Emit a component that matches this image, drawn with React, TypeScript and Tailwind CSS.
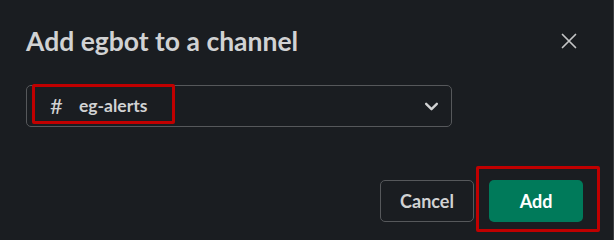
import React from 'react';

const ChevronDown: React.FC = () => (
    <svg width="15" height="15" viewBox="0 0 14 14" fill="none">
        <path d="M2 4.5 L7 9.5 L12 4.5" stroke="#d1d2d3" strokeWidth="2.2" strokeLinecap="round" strokeLinejoin="round" />
    </svg>
);

const CloseIcon: React.FC = () => (
    <svg width="16" height="16" viewBox="0 0 16 16" fill="none">
        <path d="M1.5 1.5 L14.5 14.5 M14.5 1.5 L1.5 14.5" stroke="#c4c5c6" strokeWidth="1.7" strokeLinecap="round" />
    </svg>
);

const App: React.FC = () => {
    return (
        <div
            className="relative w-[614px] h-[240px] bg-[#1a1d21] border-r border-[#3b3d40] overflow-hidden text-[#d1d2d3]"
            style={{ fontFamily: 'Lato, "Liberation Sans", sans-serif' }}
        >
            <div className="pl-[26px] pr-[30px]">
                {/* header */}
                <div className="flex items-center justify-between pt-[24px] h-[58px]">
                    <h1 className="text-[26.5px] font-bold leading-[34px]">Add egbot to a channel</h1>
                    <button className="w-[32px] h-[32px] -mr-[2px] flex items-center justify-center">
                        <CloseIcon />
                    </button>
                </div>

                {/* channel select */}
                <div className="relative mt-[27px] w-[426px] h-[42px] rounded-[5px] border border-[#56585b] flex items-center pl-[23px] pr-[12px]">
                    <span className="text-[22px] leading-none font-normal text-[#d1d2d3] w-[29px]">#</span>
                    <span className="text-[17.5px] font-bold leading-none">eg-alerts</span>
                    <span className="ml-auto flex items-center"><ChevronDown /></span>
                    <div className="absolute left-[5px] top-[-2px] w-[143px] h-[40px] border-[3px] border-[#c00000] rounded-[2px] pointer-events-none" />
                </div>

                {/* footer */}
                <div className="flex justify-end gap-[15px] mt-[53px]">
                    <button className="w-[94px] h-[42px] rounded-[5px] border border-[#56585b] text-[18px] font-bold text-[#d1d2d3]">
                        Cancel
                    </button>
                    <div className="relative">
                        <button className="w-[94px] h-[42px] rounded-[5px] bg-[#007a5a] text-[18px] font-bold text-white">
                            Add
                        </button>
                        <div className="absolute left-[-13px] top-[-14px] w-[124px] h-[66px] border-[3px] border-[#c00000] rounded-[2px] pointer-events-none" />
                    </div>
                </div>
            </div>
        </div>
    );
};

export default App;
